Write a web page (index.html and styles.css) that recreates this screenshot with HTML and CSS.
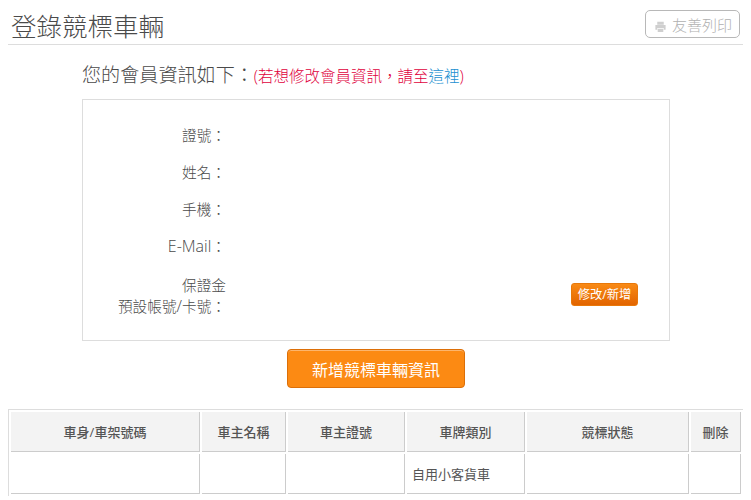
FILE: index.html
```html
<!DOCTYPE html>
<html lang="zh-Hant">
<head>
<meta charset="utf-8">
<title>登錄競標車輛</title>
<link rel="stylesheet" href="styles.css">
</head>
<body>
<header class="head">
  <h1 class="title">登錄競標車輛</h1>
  <a class="print"><svg class="print-icon" viewBox="0 0 14 14" width="13" height="13"><path d="M3.500 2h7v3h-7zM1.500 5.500h11v5h-2V8.500h-7v2h-2zM4 9.500h6V13H4z" fill="#cfcfcf"/></svg>友善列印</a>
</header>
<main class="main">
  <p class="intro">您的會員資訊如下：<span class="note">(若想修改會員資訊，請至<a class="link">這裡</a>)</span></p>
  <section class="card">
    <div class="row"><span class="label">證號：</span></div>
    <div class="row"><span class="label">姓名：</span></div>
    <div class="row"><span class="label">手機：</span></div>
    <div class="row"><span class="label"><span class="latin">E-Mail</span>：</span></div>
    <div class="row last"><span class="label">保證金<br>預設帳號<span class="latin">/</span>卡號：</span><button class="small-btn">修改/新增</button></div>
  </section>
  <div class="action"><button class="big-btn">新增競標車輛資訊</button></div>
</main>
<table class="grid">
  <colgroup><col class="c1"><col class="c2"><col class="c3"><col class="c4"><col class="c5"><col class="c6"></colgroup>
  <thead><tr><th>車身/車架號碼</th><th>車主名稱</th><th>車主證號</th><th>車牌類別</th><th>競標狀態</th><th>刪除</th></tr></thead>
  <tbody><tr><td></td><td></td><td></td><td>自用小客貨車</td><td></td><td></td></tr></tbody>
</table>
</body>
</html>
```
FILE: styles.css
```css
* { box-sizing: border-box; }
html, body { margin: 0; padding: 0; }
body { background: #fff; color: #555; font-family: "Open Sans", "Noto Sans CJK TC", sans-serif; height: 500px; overflow: hidden; }
.head { display: flex; justify-content: space-between; align-items: flex-start; margin: 0 8px; height: 45px; border-bottom: 1px solid #ddd; padding-top: 10px; }
.title { margin: -1px 0 0 3px; font-size: 25.500px; font-weight: 300; line-height: 34px; color: #4a4a4a; }
.print { display: flex; align-items: center; gap: 5px; height: 28px; padding: 0 7px 0 8px; border: 1px solid #b8b8b8; border-radius: 5px; color: #b0b0b0; font-size: 15px; font-weight: 300; margin-right: 3px; }
.print-icon { margin-top: 4px; }
.main { padding: 0 81px 0 82px; }
.intro { margin: 17px 0 0; font-size: 19.100px; font-weight: 300; line-height: 26px; color: #4a4a4a; white-space: nowrap; }
.note { font-size: 15.500px; font-weight: 300; color: #e0003c; }
.link { color: #1a8fd0; }
.card { margin-top: 10px; height: 242px; border: 1px solid #ddd; padding: 9px 31px 0 0; }
.row { display: flex; justify-content: space-between; align-items: flex-end; height: 37px; font-size: 14.670px; font-weight: 300; line-height: 21px; color: #4a4a4a; }
.label { width: 143px; text-align: right; }
.latin { font-size: 16px; font-weight: 300; }
.row.last { height: 60px; }
.small-btn { height: 23px; width: 67px; padding: 0; border: 1px solid #e8780a; border-radius: 3px; background: linear-gradient(#f98a15, #e26400); color: #fff; font: inherit; font-size: 12.300px; font-weight: 400; margin-bottom: 11px; }
.action { display: flex; justify-content: center; margin-top: 8px; }
.big-btn { width: 178px; height: 39px; padding: 0; border: 1px solid #dc6f08; border-radius: 4px; background: #fc8a13; box-shadow: inset 0 1px 0 #fdb56c; color: #fff; font: inherit; font-size: 16px; font-weight: 400; }
.grid { margin: 21px 0 0 8px; width: 735px; border-collapse: separate; border-spacing: 2px; table-layout: fixed; border-top: 1px solid #ddd; border-left: 1px solid #ddd; font-size: 13px; }
.c1 { width: 189px; }
.c2 { width: 84px; }
.c3 { width: 117px; }
.c4 { width: 118px; }
.c5 { width: 162px; }
.c6 { width: 50px; }
.grid th { height: 40px; padding: 0; background: #f3f3f3; border-right: 1px solid #ccc; border-bottom: 1px solid #ccc; color: #555; font-weight: 500; font-size: 13px; }
.grid td { height: 40px; border-right: 1px solid #ccc; border-bottom: 1px solid #ccc; padding: 0 5px; font-weight: 400; color: #555; }
```
